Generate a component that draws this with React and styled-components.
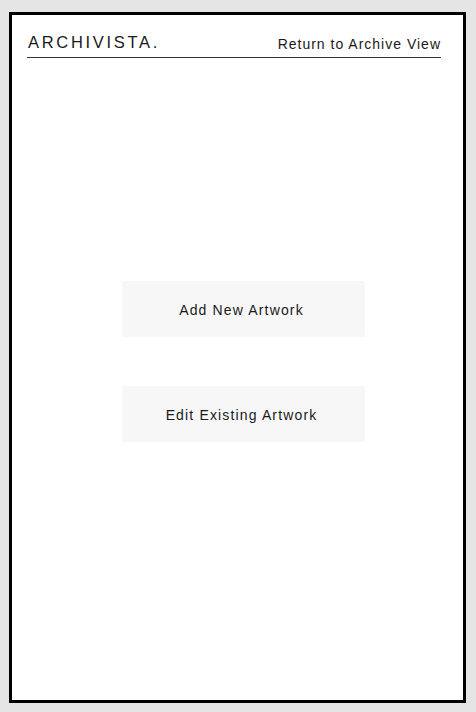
import React from 'react'
import styled, { createGlobalStyle } from 'styled-components'

const GlobalStyle = createGlobalStyle`
    html, body{
        margin: 0;
        padding: 0;
        background: #e5e5e5;
    }
    body{
        font-family: "Liberation Sans", Arial, sans-serif;
        color: #1a1a1a;
    }
    #root{
        padding: 12px 10px 9px 9px;
    }
`

function App() {
    const actions = ['Add New Artwork', 'Edit Existing Artwork']
    return (
        <>
            <GlobalStyle />
            <FrameStyled>
                <HeaderStyled>
                    <Logo>ARCHIVISTA.</Logo>
                    <NavLink href="#">Return to Archive View</NavLink>
                </HeaderStyled>
                <ActionsStyled>
                    {actions.map(label => (
                        <ActionButton key={label}>{label}</ActionButton>
                    ))}
                </ActionsStyled>
            </FrameStyled>
        </>
    )
}

const FrameStyled = styled.div`
    box-sizing: border-box;
    height: 691px;
    border: 3px solid #000;
    background: #fff;
    display: flex;
    flex-direction: column;
`

const HeaderStyled = styled.header`
    display: flex;
    justify-content: space-between;
    align-items: flex-end;
    margin: 18px 22px 0 15px;
    padding-bottom: 5px;
    border-bottom: 1px solid #333;
`

const Logo = styled.h1`
    margin: 0 0 0 1px;
    font-size: 16.5px;
    font-weight: 400;
    letter-spacing: 2.7px;
    line-height: 19px;
`

const NavLink = styled.a`
    margin-bottom: -1px;
    font-size: 14px;
    letter-spacing: 1px;
    line-height: 17px;
    color: #1a1a1a;
    text-decoration: none;
`

const ActionsStyled = styled.div`
    display: flex;
    flex-direction: column;
    align-items: center;
    gap: 49px;
    margin-top: 223px;
    padding-left: 12px;
`

const ActionButton = styled.button`
    width: 243px;
    height: 56px;
    padding: 2px 4px 0 0;
    border: none;
    border-radius: 2px;
    background: #f7f7f7;
    font-family: inherit;
    font-size: 14px;
    letter-spacing: 1.15px;
    color: #1a1a1a;
    cursor: pointer;
`

export default App
